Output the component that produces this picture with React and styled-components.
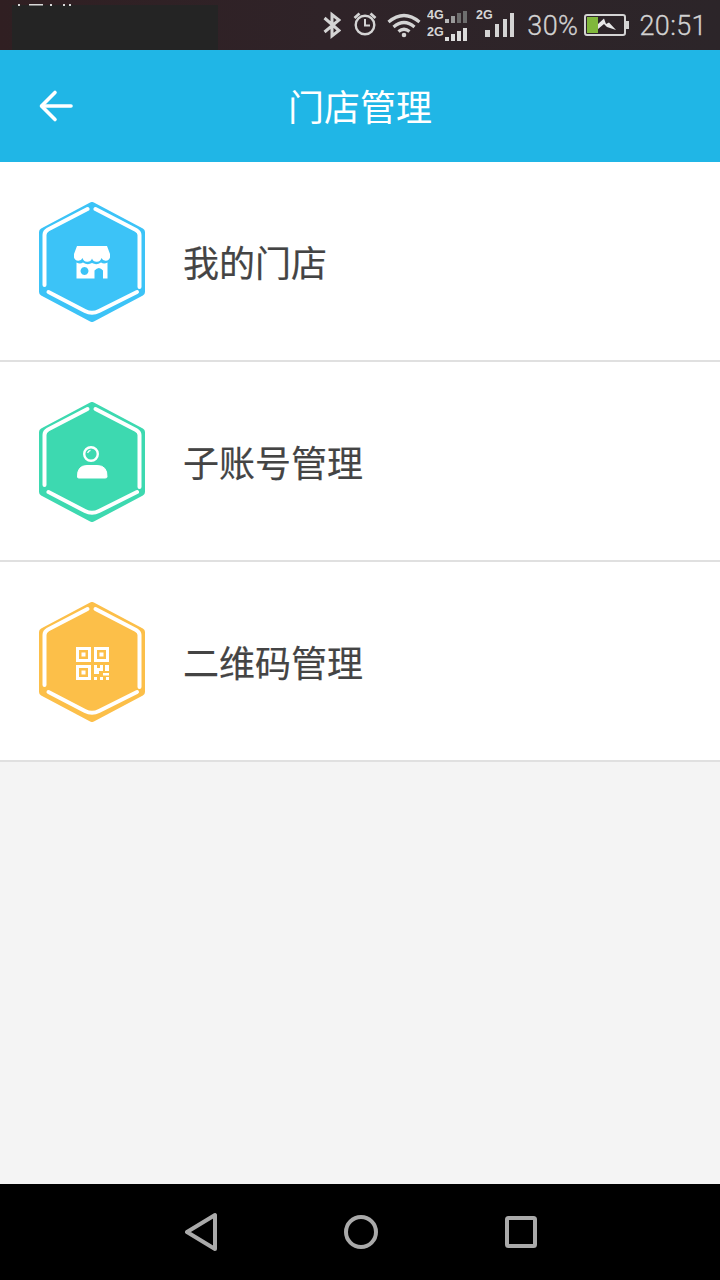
import React from 'react';
import styled, { createGlobalStyle } from 'styled-components';

const Global = createGlobalStyle`
  html, body { margin: 0; padding: 0; background: #f4f4f4; }
  #root { width: 720px; height: 1280px; }
`;

const Page = styled.div`
  width: 720px;
  height: 1280px;
  display: flex;
  flex-direction: column;
  overflow: hidden;
  background: #f4f4f4;
  font-family: "Noto Sans CJK SC", "Noto Sans", sans-serif;
`;

const StatusBar = styled.div`
  height: 50px;
  flex: none;
  display: flex;
  align-items: center;
  justify-content: space-between;
  background: linear-gradient(90deg, #301f22 0%, #2f2328 45%, #2c2529 100%);
  padding-left: 12px;
  padding-right: 13px;
  box-sizing: border-box;
  position: relative;
`;

const Redacted = styled.div`
  width: 206px;
  height: 45px;
  align-self: flex-end;
  background: #242424;
`;

const CarrierSpecks = styled.svg`
  position: absolute;
  left: 17px;
  top: 3px;
  width: 58px;
  height: 3px;
`;

const StatusIcons = styled.div`
  display: flex;
  align-items: center;
  height: 50px;
`;

const Icon = styled.svg`
  display: block;
  flex: none;
  margin-left: ${(p) => p.$ml || 0}px;
`;

const StatusText = styled.span`
  font-family: Roboto, "Liberation Sans", sans-serif;
  font-size: 27px;
  font-weight: 300;
  line-height: 50px;
  letter-spacing: 0.4px;
  color: #d2d2d2;
  margin-left: ${(p) => p.$ml || 0}px;
  padding-top: 2px;
  -webkit-text-stroke: 0.3px #d2d2d2;
`;

const Header = styled.header`
  height: 112px;
  flex: none;
  background: #20b6e6;
  display: flex;
  align-items: center;
  justify-content: center;
  position: relative;
`;

const BackButton = styled.div`
  position: absolute;
  left: 38px;
  top: 39px;
  width: 37px;
  height: 34px;
`;

const Title = styled.h1`
  margin: 0 0 3px;
  font-size: 36px;
  font-weight: 400;
  line-height: 50px;
  color: #fff;
`;

const List = styled.div`
  flex: none;
  display: flex;
  flex-direction: column;
`;

const Row = styled.div`
  height: 200px;
  box-sizing: border-box;
  background: #fff;
  border-bottom: 2px solid #e0e0e0;
  display: flex;
  align-items: center;
  padding-left: 39px;
  padding-top: 2px;
`;

const Label = styled.span`
  margin-left: 39px;
  margin-bottom: 2px;
  transform: translateX(-1px);
  font-size: 36px;
  line-height: 50px;
  color: #444;
  -webkit-text-stroke: 0.2px #444;
`;

const Spacer = styled.div`
  flex: 1;
`;

const NavBar = styled.nav`
  height: 96px;
  flex: none;
  background: #000;
  display: flex;
  align-items: center;
  justify-content: center;
  gap: 127px;
  padding-left: 2px;
`;

const Hex = ({ color, children }) => (
  <Icon width="106" height="120" viewBox="0 0 106 120">
    <path
      d="M53 4 L102 30 L102 90 L53 116 L4 90 L4 30 Z"
      fill={color}
      stroke={color}
      strokeWidth="8"
      strokeLinejoin="round"
    />
    <g fill="none" stroke="#fff" strokeWidth="4" strokeLinecap="round" strokeLinejoin="round">
      <path d="M5.500 83 L5.500 33 Q5.500 29.500 9 27.500 L48.500 7" />
      <path d="M56.500 7 L97 28 Q100.500 30 100.500 33 L100.500 85" />
      <path d="M9.500 90 L46 109 Q53 112.500 60 109 L98 90" />
    </g>
    {children}
  </Icon>
);

const Shop = () => (
  <g fill="#fff">
    <path d="M38 44 H68 L71 52 V55.500 A4.500 4.500 0 0 1 62.500 56 A5 5 0 0 1 53 56.500 A5 5 0 0 1 43.500 56 A4.500 4.500 0 0 1 35 55.500 V52 Z" />
    <path fillRule="evenodd" d="M37.500 60.500 Q41 62.500 44 60.500 Q48.500 63.500 53 61 Q57.500 63.500 62 60.500 Q65 62.500 68.500 60.500 V76.500 H37.500 Z M45.500 65 a4 4 0 1 0 .01 0 Z M55.500 76.500 H64 V68.500 Q60 63.500 55.500 68.500 Z" />
  </g>
);

const Person = () => (
  <g>
    <circle cx="52" cy="52" r="6.800" fill="none" stroke="#fff" strokeWidth="2.400" />
    <path d="M48.600 51 A3.800 3.800 0 0 1 51.500 48.300" fill="none" stroke="#fff" strokeWidth="1.200" />
    <path d="M38.500 75 Q38 63.500 48 63.500 H58 Q68.500 63.500 68 75 Q68 76 66 76 H40 Q38.500 76 38.500 75 Z" fill="#fff" stroke="#fff" strokeWidth="1" strokeLinejoin="round" />
  </g>
);

const Qr = () => (
  <g>
    <g fill="none" stroke="#fff" strokeWidth="3">
      <rect x="38.500" y="46.500" width="12" height="12" />
      <rect x="56.500" y="46.500" width="12" height="12" />
      <rect x="38.500" y="64.500" width="12" height="12" />
    </g>
    <g fill="#fff">
      <rect x="42.500" y="50.500" width="4" height="4" />
      <rect x="60.500" y="50.500" width="4" height="4" />
      <rect x="42.500" y="68.500" width="4" height="4" />
      <path d="M55 63 H58 V66 H61 V63 H64 V69 H60 V72 H55 Z" />
      <rect x="66" y="63" width="4" height="6" />
      <rect x="64" y="71" width="6" height="2.500" />
      <rect x="55" y="75" width="3" height="3" />
      <rect x="61" y="75" width="3" height="3" />
      <rect x="67" y="75" width="3" height="3" />
    </g>
  </g>
);

const rows = [
  { label: '我的门店', color: '#3cc3f7', glyph: <Shop /> },
  { label: '子账号管理', color: '#3dd9b0', glyph: <Person /> },
  { label: '二维码管理', color: '#fcbf49', glyph: <Qr /> },
];

const NetText = styled.text`
  font-family: "Liberation Sans", sans-serif;
  font-size: 12.500px;
  font-weight: 700;
  fill: #d6d6d6;
`;

const StatusSvg = ({ ml, w, children, ...rest }) => (
  <Icon $ml={ml} width={w} height="50" viewBox={`0 0 ${w} 50`} {...rest}>
    {children}
  </Icon>
);

export default function App() {
  return (
    <Page>
      <Global />
      <StatusBar>
        <CarrierSpecks viewBox="0 0 58 3" fill="#d8d8d8">
          <rect x="1" y="1" width="2" height="2" />
          <rect x="12" y="1" width="14" height="1.500" />
          <rect x="33" y="1" width="2" height="2" />
          <rect x="46" y="1" width="2" height="2" />
          <rect x="52" y="1" width="2" height="2" />
        </CarrierSpecks>
        <Redacted />
        <StatusIcons>
          <StatusSvg w={18} fill="none" stroke="#d4d4d4" strokeWidth="3">
            <path d="M1.500 18 L16 30.500 L9 36 V14.500 L16 20 L1.500 32" />
          </StatusSvg>
          <StatusSvg ml={12} w={24} fill="none" stroke="#d4d4d4" strokeWidth="2.400">
            <circle cx="12" cy="25" r="9.300" />
            <path d="M12 19 V25.500 H17" strokeWidth="2" />
            <path d="M1.500 18 L6.500 13.500 M22.500 18 L17.500 13.500" strokeWidth="2.800" />
          </StatusSvg>
          <StatusSvg ml={10} w={34} fill="none" stroke="#d4d4d4" strokeWidth="3.200">
            <path d="M1.500 22 Q17 9 32.500 22" />
            <path d="M6.500 27 Q17 18 27.500 27" />
            <path d="M11.500 31.500 Q17 27 22.500 31.500" />
            <circle cx="17" cy="35" r="2.300" fill="#d4d4d4" stroke="none" />
          </StatusSvg>
          <StatusSvg ml={6} w={41}>
            <NetText x="0" y="18.500">4G</NetText>
            <NetText x="0" y="35.500">2G</NetText>
            <rect x="18" y="19" width="4" height="4" fill="#b8b8b8" />
            <rect x="24" y="16" width="4" height="7" fill="#9a9a9a" />
            <rect x="30" y="13" width="4" height="10" fill="#6e6e6e" />
            <rect x="36" y="11" width="4" height="12" fill="#6e6e6e" />
            <rect x="18" y="37" width="4" height="4" fill="#dcdcdc" />
            <rect x="24" y="34" width="4" height="7" fill="#dcdcdc" />
            <rect x="30" y="31" width="4" height="10" fill="#dcdcdc" />
            <rect x="36" y="28" width="4" height="13" fill="#dcdcdc" />
          </StatusSvg>
          <StatusSvg ml={8} w={38} fill="#d4d4d4">
            <NetText x="0" y="18.500">2G</NetText>
            <rect x="9" y="30" width="5" height="7" />
            <rect x="19" y="24" width="4" height="13" />
            <rect x="27" y="19" width="4" height="18" />
            <rect x="34" y="13" width="4" height="24" />
          </StatusSvg>
          <StatusText $ml={13}>30%</StatusText>
          <StatusSvg ml={6} w={45}>
            <rect x="1" y="15" width="40" height="20" rx="2" fill="none" stroke="#d4d4d4" strokeWidth="2" />
            <rect x="3" y="17" width="11" height="16" fill="#80b83c" />
            <rect x="42" y="21" width="3" height="8" fill="#d4d4d4" />
            <path d="M14 24 L20 18.500 L22 24 L25 22.500 L32 30 L23 27 L20 24 L14 29 Z" fill="#e8e8e8" />
          </StatusSvg>
          <StatusText $ml={10}>20:51</StatusText>
        </StatusIcons>
      </StatusBar>
      <Header>
        <BackButton>
          <Icon width="37" height="34" viewBox="0 0 37 34" fill="none" stroke="#fff" strokeWidth="3.600" strokeLinecap="round" strokeLinejoin="round">
            <path d="M4 17 H33" />
            <path d="M17 3.500 L3.500 17 L17 30.500" />
          </Icon>
        </BackButton>
        <Title>门店管理</Title>
      </Header>
      <List>
        {rows.map((r) => (
          <Row key={r.label}>
            <Hex color={r.color}>{r.glyph}</Hex>
            <Label>{r.label}</Label>
          </Row>
        ))}
      </List>
      <Spacer />
      <NavBar>
        <Icon width="32" height="40" viewBox="0 0 32 40" fill="none" stroke="#aaa" strokeWidth="4" strokeLinejoin="round">
          <path d="M30 3 L30 37 L2 20 Z" />
        </Icon>
        <Icon width="34" height="34" viewBox="0 0 34 34" fill="none" stroke="#aaa" strokeWidth="4">
          <circle cx="17" cy="17" r="15" />
        </Icon>
        <Icon width="32" height="32" viewBox="0 0 32 32" fill="none" stroke="#aaa" strokeWidth="4" strokeLinejoin="round">
          <rect x="2" y="2" width="28" height="28" rx="1.500" />
        </Icon>
      </NavBar>
    </Page>
  );
}
